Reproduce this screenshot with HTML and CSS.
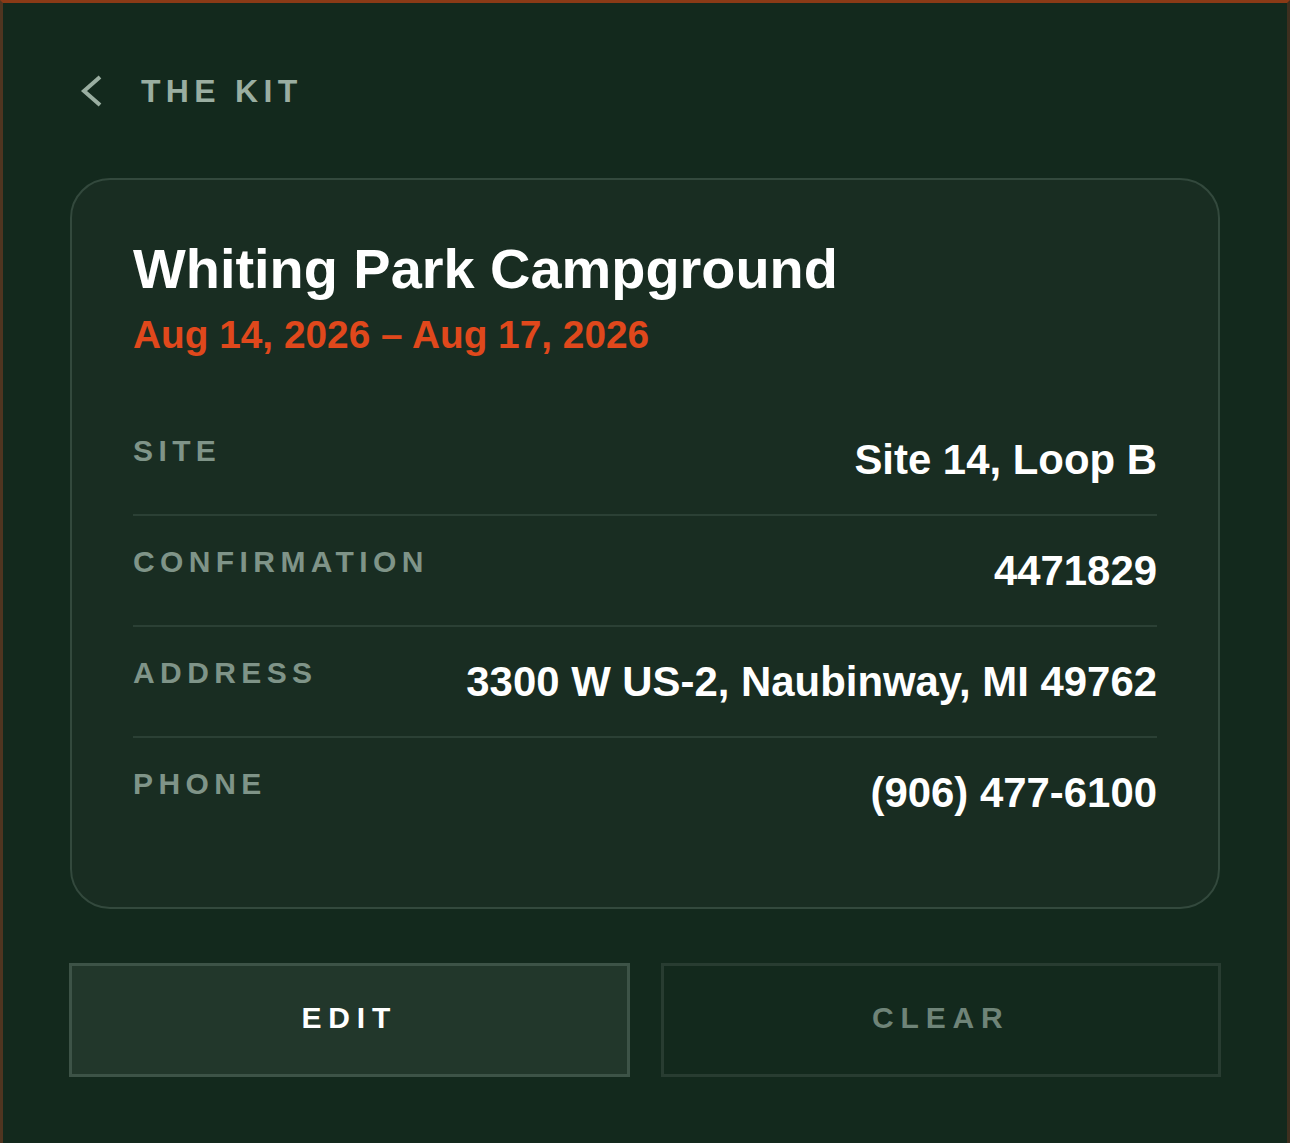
FILE: index.html
```html
<!DOCTYPE html>
<html lang="en">
<head>
<meta charset="utf-8">
<title>The Kit – Whiting Park Campground</title>
<link rel="stylesheet" href="styles.css">
</head>
<body>
<main class="page">
  <header class="topbar">
    <a class="back" href="#">
      <svg class="back-icon" viewBox="0 0 24 34" width="24" height="34" aria-hidden="true">
        <polyline points="20,3 4,17 20,31" fill="none" stroke="currentColor" stroke-width="4"/>
      </svg>
      <span class="back-label">THE KIT</span>
    </a>
  </header>

  <section class="card">
    <div class="card-head">
      <h1 class="title">Whiting Park Campground</h1>
      <p class="dates">Aug 14, 2026 – Aug 17, 2026</p>
    </div>
    <dl class="details">
      <div class="row">
        <dt class="label">SITE</dt>
        <dd class="value">Site 14, Loop B</dd>
      </div>
      <div class="row">
        <dt class="label">CONFIRMATION</dt>
        <dd class="value">4471829</dd>
      </div>
      <div class="row">
        <dt class="label">ADDRESS</dt>
        <dd class="value">3300 W US-2, Naubinway, MI 49762</dd>
      </div>
      <div class="row">
        <dt class="label">PHONE</dt>
        <dd class="value">(906) 477-6100</dd>
      </div>
    </dl>
  </section>

  <div class="actions">
    <button class="btn btn-edit" type="button">EDIT</button>
    <button class="btn btn-clear" type="button">CLEAR</button>
  </div>
</main>
</body>
</html>
```

FILE: styles.css
```css
* {
  box-sizing: border-box;
}

html {
  background: #13291d;
}

body {
  margin: 0;
  min-height: 1143px;
  background: #13291d;
  border-top: 3px solid #8a3a16;
  border-left: 3px solid #4f3520;
  border-right: 3px solid #3e2f1f;
  font-family: "Liberation Sans", Arial, sans-serif;
  color: #ffffff;
}

.page {
  padding: 0 67px;
}

.topbar {
  padding-top: 69px;
  padding-left: 10px;
  display: flex;
}

.back {
  display: flex;
  align-items: center;
  gap: 37px;
  color: #9aaea1;
  text-decoration: none;
}

.back-icon {
  display: block;
  flex: none;
}

.back-label {
  font-size: 32px;
  line-height: 38.4px;
  font-weight: 700;
  letter-spacing: 5.3px;
}

.card {
  margin-top: 68px;
  border: 2px solid #33493d;
  border-radius: 40px;
  background: #192d22;
  padding: 55px 61px 60px;
}

.card-head {
  margin-bottom: 46px;
}

.title {
  margin: 0;
  font-size: 55.9px;
  line-height: 1.2;
  font-weight: 700;
  color: #ffffff;
}

.dates {
  margin: 10px 0 0;
  font-size: 38.8px;
  line-height: 1.2;
  font-weight: 700;
  color: #e0481c;
}

.details {
  margin: 0;
}

.row {
  display: flex;
  justify-content: space-between;
  align-items: flex-start;
  gap: 40px;
  padding: 30px 0 29px;
  border-bottom: 2px solid #2b4035;
}

.row:last-child {
  border-bottom: 0;
}

.label {
  margin: 0;
  font-size: 30px;
  line-height: 32px;
  font-weight: 700;
  letter-spacing: 5.4px;
  color: #7f9488;
}

.value {
  margin: 0;
  font-size: 41.9px;
  line-height: 50px;
  font-weight: 700;
  color: #ffffff;
  text-align: right;
}

.actions {
  margin-top: 54px;
  display: grid;
  grid-template-columns: 1fr 1fr;
  gap: 31px;
  margin-left: -1px;
  margin-right: -1px;
}

.btn {
  height: 114px;
  display: flex;
  align-items: center;
  justify-content: center;
  font-family: "Liberation Sans", Arial, sans-serif;
  font-size: 30px;
  font-weight: 700;
  letter-spacing: 6.8px;
  padding: 0 0 4px 0;
  border-radius: 0;
  cursor: pointer;
}

.btn-edit {
  background: #22372b;
  border: 3px solid #3d5347;
  color: #ffffff;
}

.btn-clear {
  background: transparent;
  border: 3px solid #283c31;
  color: #6f8478;
}
```
